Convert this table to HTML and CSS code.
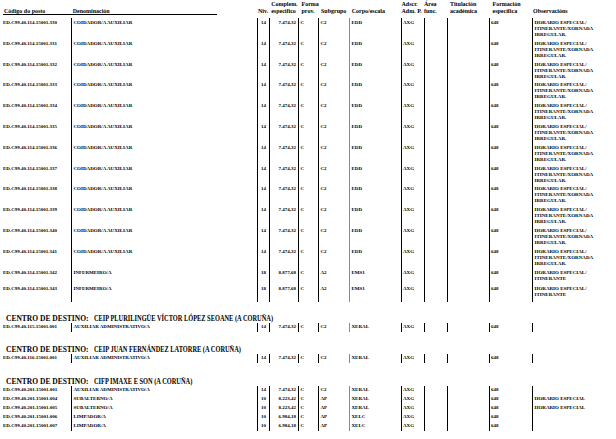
FILE: index.html
```html
<!DOCTYPE html>
<html lang="gl">
<head>
<meta charset="utf-8">
<title>Postos</title>
<link rel="stylesheet" href="styles.css">
</head>
<body>
<table class="grid">
<colgroup>
<col class="w1"><col class="w2"><col class="w3"><col class="w4"><col class="w5"><col class="w6"><col class="w7"><col class="w8"><col class="w9"><col class="w10"><col class="w11"><col class="w12">
</colgroup>
<thead>
<tr class="head">
<th class="h1">Código do posto</th>
<th class="h2">Denominación</th>
<th class="h3">Niv.</th>
<th class="h4">Complem.<br>específico</th>
<th class="h5">Forma<br>prov.</th>
<th class="h6">Subgrupo</th>
<th class="h7">Corpo/escala</th>
<th class="h8">Adscr.<br>Adm. P.</th>
<th class="h9">Área<br>func.</th>
<th class="h10">Titulación<br>académica</th>
<th class="h11">Formación<br>específica</th>
<th class="h12">Observacións</th>
</tr>
<tr class="rule"><td colspan="12"><div class="line"></div></td></tr>
</thead>
<tbody>
<tr class="r3"><td class="c1">ED.C99.40.114.15001.330</td><td class="b c2">COIDADOR/A AUXILIAR</td><td class="b c3">14</td><td class="b c4">7.474,32</td><td class="b c5">C</td><td class="b c6">C2</td><td class="g c7">EDD</td><td class="b c8">AXG</td><td class="b c9"></td><td class="b c10"></td><td class="b c11">648</td><td class="b c12">HORARIO ESPECIAL/<br>ITINERANTE/XORNADA<br>IRREGULAR.</td></tr>
<tr class="r3"><td class="c1">ED.C99.40.114.15001.331</td><td class="b c2">COIDADOR/A AUXILIAR</td><td class="b c3">14</td><td class="b c4">7.474,32</td><td class="b c5">C</td><td class="b c6">C2</td><td class="g c7">EDD</td><td class="b c8">AXG</td><td class="b c9"></td><td class="b c10"></td><td class="b c11">648</td><td class="b c12">HORARIO ESPECIAL/<br>ITINERANTE/XORNADA<br>IRREGULAR.</td></tr>
<tr class="r3"><td class="c1">ED.C99.40.114.15001.332</td><td class="b c2">COIDADOR/A AUXILIAR</td><td class="b c3">14</td><td class="b c4">7.474,32</td><td class="b c5">C</td><td class="b c6">C2</td><td class="g c7">EDD</td><td class="b c8">AXG</td><td class="b c9"></td><td class="b c10"></td><td class="b c11">648</td><td class="b c12">HORARIO ESPECIAL/<br>ITINERANTE/XORNADA<br>IRREGULAR.</td></tr>
<tr class="r3"><td class="c1">ED.C99.40.114.15001.333</td><td class="b c2">COIDADOR/A AUXILIAR</td><td class="b c3">14</td><td class="b c4">7.474,32</td><td class="b c5">C</td><td class="b c6">C2</td><td class="g c7">EDD</td><td class="b c8">AXG</td><td class="b c9"></td><td class="b c10"></td><td class="b c11">648</td><td class="b c12">HORARIO ESPECIAL/<br>ITINERANTE/XORNADA<br>IRREGULAR.</td></tr>
<tr class="r3"><td class="c1">ED.C99.40.114.15001.334</td><td class="b c2">COIDADOR/A AUXILIAR</td><td class="b c3">14</td><td class="b c4">7.474,32</td><td class="b c5">C</td><td class="b c6">C2</td><td class="g c7">EDD</td><td class="b c8">AXG</td><td class="b c9"></td><td class="b c10"></td><td class="b c11">648</td><td class="b c12">HORARIO ESPECIAL/<br>ITINERANTE/XORNADA<br>IRREGULAR.</td></tr>
<tr class="r3"><td class="c1">ED.C99.40.114.15001.335</td><td class="b c2">COIDADOR/A AUXILIAR</td><td class="b c3">14</td><td class="b c4">7.474,32</td><td class="b c5">C</td><td class="b c6">C2</td><td class="g c7">EDD</td><td class="b c8">AXG</td><td class="b c9"></td><td class="b c10"></td><td class="b c11">648</td><td class="b c12">HORARIO ESPECIAL/<br>ITINERANTE/XORNADA<br>IRREGULAR.</td></tr>
<tr class="r3"><td class="c1">ED.C99.40.114.15001.336</td><td class="b c2">COIDADOR/A AUXILIAR</td><td class="b c3">14</td><td class="b c4">7.474,32</td><td class="b c5">C</td><td class="b c6">C2</td><td class="g c7">EDD</td><td class="b c8">AXG</td><td class="b c9"></td><td class="b c10"></td><td class="b c11">648</td><td class="b c12">HORARIO ESPECIAL/<br>ITINERANTE/XORNADA<br>IRREGULAR.</td></tr>
<tr class="r3"><td class="c1">ED.C99.40.114.15001.337</td><td class="b c2">COIDADOR/A AUXILIAR</td><td class="b c3">14</td><td class="b c4">7.474,32</td><td class="b c5">C</td><td class="b c6">C2</td><td class="g c7">EDD</td><td class="b c8">AXG</td><td class="b c9"></td><td class="b c10"></td><td class="b c11">648</td><td class="b c12">HORARIO ESPECIAL/<br>ITINERANTE/XORNADA<br>IRREGULAR.</td></tr>
<tr class="r3"><td class="c1">ED.C99.40.114.15001.338</td><td class="b c2">COIDADOR/A AUXILIAR</td><td class="b c3">14</td><td class="b c4">7.474,32</td><td class="b c5">C</td><td class="b c6">C2</td><td class="g c7">EDD</td><td class="b c8">AXG</td><td class="b c9"></td><td class="b c10"></td><td class="b c11">648</td><td class="b c12">HORARIO ESPECIAL/<br>ITINERANTE/XORNADA<br>IRREGULAR.</td></tr>
<tr class="r3"><td class="c1">ED.C99.40.114.15001.339</td><td class="b c2">COIDADOR/A AUXILIAR</td><td class="b c3">14</td><td class="b c4">7.474,32</td><td class="b c5">C</td><td class="b c6">C2</td><td class="g c7">EDD</td><td class="b c8">AXG</td><td class="b c9"></td><td class="b c10"></td><td class="b c11">648</td><td class="b c12">HORARIO ESPECIAL/<br>ITINERANTE/XORNADA<br>IRREGULAR.</td></tr>
<tr class="r3"><td class="c1">ED.C99.40.114.15001.340</td><td class="b c2">COIDADOR/A AUXILIAR</td><td class="b c3">14</td><td class="b c4">7.474,32</td><td class="b c5">C</td><td class="b c6">C2</td><td class="g c7">EDD</td><td class="b c8">AXG</td><td class="b c9"></td><td class="b c10"></td><td class="b c11">648</td><td class="b c12">HORARIO ESPECIAL/<br>ITINERANTE/XORNADA<br>IRREGULAR.</td></tr>
<tr class="r3"><td class="c1">ED.C99.40.114.15001.341</td><td class="b c2">COIDADOR/A AUXILIAR</td><td class="b c3">14</td><td class="b c4">7.474,32</td><td class="b c5">C</td><td class="b c6">C2</td><td class="g c7">EDD</td><td class="b c8">AXG</td><td class="b c9"></td><td class="b c10"></td><td class="b c11">648</td><td class="b c12">HORARIO ESPECIAL/<br>ITINERANTE/XORNADA<br>IRREGULAR.</td></tr>
<tr class="r2"><td class="c1">ED.C99.40.114.15001.342</td><td class="b c2">INFERMEIRO/A</td><td class="b c3">18</td><td class="b c4">8.877,68</td><td class="b c5">C</td><td class="b c6">A2</td><td class="g c7">EMS1</td><td class="b c8">AXG</td><td class="b c9"></td><td class="b c10"></td><td class="b c11">648</td><td class="b c12">HORARIO ESPECIAL/<br>ITINERANTE</td></tr>
<tr class="r2 last"><td class="c1">ED.C99.40.114.15001.343</td><td class="b c2">INFERMEIRO/A</td><td class="b c3">18</td><td class="b c4">8.877,68</td><td class="b c5">C</td><td class="b c6">A2</td><td class="g c7">EMS1</td><td class="b c8">AXG</td><td class="b c9"></td><td class="b c10"></td><td class="b c11">648</td><td class="b c12">HORARIO ESPECIAL/<br>ITINERANTE</td></tr>

<tr class="sec first"><td colspan="12"><span class="lbl">CENTRO DE DESTINO:</span><span class="name">CEIP PLURILINGÜE VÍCTOR LÓPEZ SEOANE (A CORUÑA)</span></td></tr>
<tr class="r1"><td class="c1">ED.C99.40.115.15001.001</td><td class="b c2">AUXILIAR ADMINISTRATIVO/A</td><td class="b c3">14</td><td class="b c4">7.474,32</td><td class="b c5">C</td><td class="b c6">C2</td><td class="g c7">XERAL</td><td class="b c8">AXG</td><td class="b c9"></td><td class="b c10"></td><td class="b c11">648</td><td class="b c12"></td></tr>

<tr class="sec"><td colspan="12"><span class="lbl">CENTRO DE DESTINO:</span><span class="name">CEIP JUAN FERNÁNDEZ LATORRE (A CORUÑA)</span></td></tr>
<tr class="r1"><td class="c1">ED.C99.40.116.15001.001</td><td class="b c2">AUXILIAR ADMINISTRATIVO/A</td><td class="b c3">14</td><td class="b c4">7.474,32</td><td class="b c5">C</td><td class="b c6">C2</td><td class="g c7">XERAL</td><td class="b c8">AXG</td><td class="b c9"></td><td class="b c10"></td><td class="b c11">648</td><td class="b c12"></td></tr>

<tr class="sec third"><td colspan="12"><span class="lbl">CENTRO DE DESTINO:</span><span class="name">CIFP IMAXE E SON (A CORUÑA)</span></td></tr>
<tr class="r1"><td class="c1">ED.C99.40.201.15001.001</td><td class="b c2">AUXILIAR ADMINISTRATIVO/A</td><td class="b c3">14</td><td class="b c4">7.474,32</td><td class="b c5">C</td><td class="b c6">C2</td><td class="g c7">XERAL</td><td class="b c8">AXG</td><td class="b c9"></td><td class="b c10"></td><td class="b c11">648</td><td class="b c12"></td></tr>
<tr class="r1"><td class="c1">ED.C99.40.201.15001.004</td><td class="b c2">SUBALTERNO/A</td><td class="b c3">10</td><td class="b c4">8.223,42</td><td class="b c5">C</td><td class="b c6">AP</td><td class="g c7">XERAL</td><td class="b c8">AXG</td><td class="b c9"></td><td class="b c10"></td><td class="b c11">648</td><td class="b c12">HORARIO ESPECIAL</td></tr>
<tr class="r1"><td class="c1">ED.C99.40.201.15001.005</td><td class="b c2">SUBALTERNO/A</td><td class="b c3">10</td><td class="b c4">8.223,42</td><td class="b c5">C</td><td class="b c6">AP</td><td class="g c7">XERAL</td><td class="b c8">AXG</td><td class="b c9"></td><td class="b c10"></td><td class="b c11">648</td><td class="b c12">HORARIO ESPECIAL</td></tr>
<tr class="r1"><td class="c1">ED.C99.40.201.15001.006</td><td class="b c2">LIMPADOR/A</td><td class="b c3">10</td><td class="b c4">6.984,18</td><td class="b c5">C</td><td class="b c6">AP</td><td class="g c7">XELC</td><td class="b c8">AXG</td><td class="b c9"></td><td class="b c10"></td><td class="b c11">648</td><td class="b c12"></td></tr>
<tr class="r1"><td class="c1">ED.C99.40.201.15001.007</td><td class="b c2">LIMPADOR/A</td><td class="b c3">10</td><td class="b c4">6.984,18</td><td class="b c5">C</td><td class="b c6">AP</td><td class="g c7">XELC</td><td class="b c8">AXG</td><td class="b c9"></td><td class="b c10"></td><td class="b c11">648</td><td class="b c12"></td></tr>
</tbody>
</table>
</body>
</html>
```

FILE: styles.css
```css
html, body {
  margin: 0;
  padding: 0;
  background: #fff;
}
body {
  font-family: "Liberation Serif", "Times New Roman", serif;
  font-weight: bold;
  color: #000;
  width: 616px;
  overflow: hidden;
}
.grid {
  border-collapse: separate;
  border-spacing: 0;
  table-layout: fixed;
  width: 616px;
}
.w1 { width: 71px; }
.w2 { width: 186px; }
.w3 { width: 12px; }
.w4 { width: 29px; }
.w5 { width: 20px; }
.w6 { width: 31px; }
.w7 { width: 52px; }
.w8 { width: 23px; }
.w9 { width: 23px; }
.w10 { width: 42px; }
.w11 { width: 43px; }
.w12 { width: 84px; }

th, td {
  padding: 0;
  white-space: nowrap;
  overflow: visible;
}
th {
  font-size: 6px;
  line-height: 6.5px;
  text-align: left;
  vertical-align: bottom;
  font-weight: bold;
}
.head { height: 14px; }
.head th { padding-bottom: 0; }
.h1 { padding-left: 4px; }
.h2 { padding-left: 1.7px; }
.h3 { padding-left: 1px; }
.h4 { padding-left: 2.2px; }
.h5 { padding-left: 3.5px; }
.h6 { padding-left: 3px; }
.h7 { padding-left: 2.7px; }
.h8 { padding-left: 0.5px; }
.h9 { padding-left: 0; }
.h10 { padding-left: 3px; }
.h11 { padding-left: 3.5px; }
.h12 { padding-left: 1px; }

.rule { height: 4px; }
.rule td { vertical-align: top; }
.line {
  margin-left: 3px;
  width: 214px;
  border-top: 1px solid #000;
}

td {
  font-size: 5px;
  line-height: 6px;
  vertical-align: top;
}
td.b { border-left: 1px solid #000; }
td.g { border-left: 1px solid #8a8a8a; }

.r3 { height: 20.8px; }
.r3 td { padding-top: 2px; }
.r2 { height: 16px; }
.r2 td { padding-top: 2px; }
.r2.last { height: 18.4px; }
.r1 { height: 9px; }
.r1 td { padding-top: 1.5px; }

.c1 { padding-left: 3px; }
.c2 { padding-left: 1.5px; }
.c3 { text-align: center; }
.c4 { text-align: right; padding-right: 2px; }
.c5, .c6, .c7 { padding-left: 1.5px; }
.c8, .c11 { padding-left: 1px; }
.c12 { padding-left: 1.5px; }

.sec { height: 22px; }
.sec td {
  font-size: 7.5px;
  line-height: 8px;
  vertical-align: bottom;
  padding-left: 6px;
}
.sec.first { height: 21px; }
.sec.third { height: 23px; }
.lbl {
  display: inline-block;
  width: 88px;
}
.name {
  display: inline-block;
  transform: scaleX(0.85);
  transform-origin: left center;
}
```
